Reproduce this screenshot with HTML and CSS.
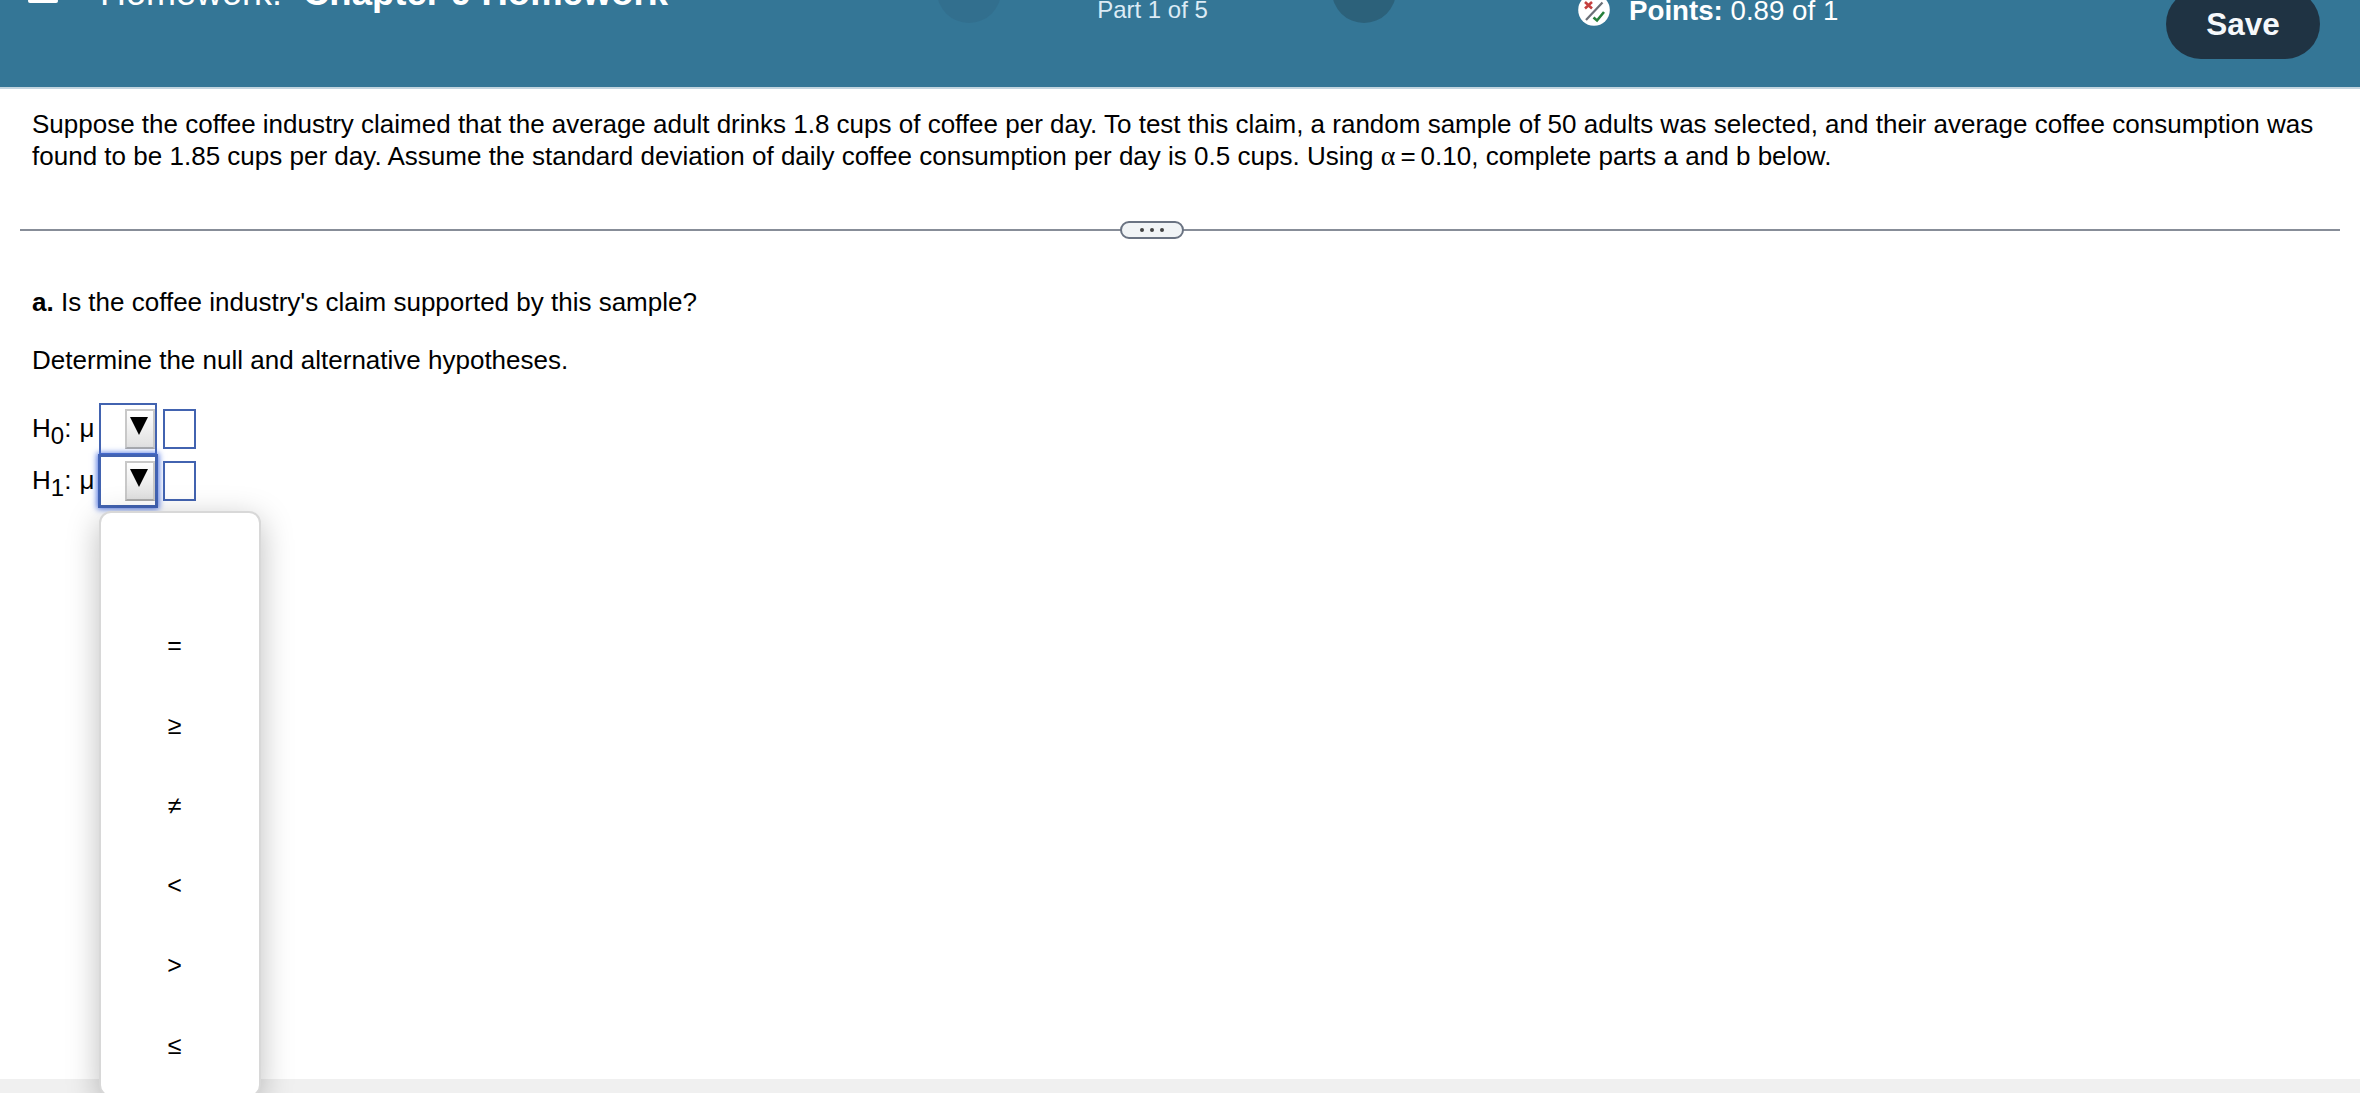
FILE: index.html
```html
<!DOCTYPE html>
<html lang="en">
<head>
    <meta charset="UTF-8">
    <meta name="viewport" content="width=device-width, initial-scale=1.0">
    <title>Homework: Chapter 9 Homework</title>
    <link rel="stylesheet" href="styles.css">
</head>
<body>
    <header class="top-bar">
        <div class="title-area">
            <span class="menu-icon"></span>
            <span class="title">Homework:</span>
            <span class="title-name">Chapter 9 Homework</span>
        </div>
        <div class="part-nav">
            <span class="nav-circle disabled"></span>
            <span class="part">Part 1 of 5</span>
            <span class="nav-circle"></span>
        </div>
        <div class="points">
            <svg class="points-icon" width="32" height="32" viewBox="0 0 32 32">
                <circle cx="16" cy="16" r="15.8" fill="#fff"/>
                <path d="M8 26 L24.500 8.500" stroke="#6b6f76" stroke-width="2.200"/>
                <path d="M7 8 L14 14.500 M14 8 L7 14.500" stroke="#c5403f" stroke-width="2.600"/>
                <path d="M15.500 23.500 L19 26.500 L26 18" fill="none" stroke="#26803a" stroke-width="2.600"/>
            </svg>
            <span class="points-text"><b>Points:</b> 0.89 of 1</span>
        </div>
        <button class="save-btn">Save</button>
    </header>

    <main class="content">
        <p class="question">Suppose the coffee industry claimed that the average adult drinks 1.8 cups of coffee per day. To test this claim, a random sample of 50 adults was selected, and their average coffee consumption was<br><span class="second-line">found to be 1.85 cups per day. Assume the standard deviation of daily coffee consumption per day is 0.5 cups. Using <span class="alpha">α</span><span class="eq">=</span>0.10, complete parts a and b below.</span></p>

        <div class="divider">
            <button class="divider-btn"><i></i><i></i><i></i></button>
        </div>

        <p class="part-a"><b>a.</b> Is the coffee industry's claim supported by this sample?</p>
        <p class="task">Determine the null and alternative hypotheses.</p>

        <div class="hypothesis">
            <span class="label">H<sub>0</sub>:<span class="mu">μ</span></span>
            <div class="select"><span class="arrow-btn"><span class="arrow"></span></span></div>
            <div class="answer"></div>
        </div>
        <div class="hypothesis">
            <span class="label">H<sub>1</sub>:<span class="mu">μ</span></span>
            <div class="select focused">
                <span class="arrow-btn"><span class="arrow"></span></span>
                <ul class="menu">
                    <li></li>
                    <li>=</li>
                    <li>≥</li>
                    <li>≠</li>
                    <li>&lt;</li>
                    <li>&gt;</li>
                    <li>≤</li>
                </ul>
            </div>
            <div class="answer"></div>
        </div>
    </main>
    <footer class="bottom-bar"></footer>
</body>
</html>
```
FILE: styles.css
```css
* {
    box-sizing: border-box;
}

body {
    margin: 0;
    height: 1093px;
    overflow: hidden;
    display: flex;
    flex-direction: column;
    font-family: "Liberation Sans", Arial, sans-serif;
    font-size: 26px;
    color: #000;
    background-color: #fff;
}

p {
    margin: 0;
}

/* header, scrolled partly out of the window */
.top-bar {
    height: 89px;
    flex-shrink: 0;
    display: grid;
    grid-template-columns: 937px 641px 588px 154px;
    align-items: start;
    background-color: #347696;
    border-bottom: 2px solid #c3d5df;
    color: #fff;
    white-space: nowrap;
}

.title-area {
    display: flex;
    align-items: flex-start;
    margin-top: -27px;
    padding-left: 28px;
    font-size: 36px;
    line-height: 40px;
}

.menu-icon {
    width: 30px;
    height: 4px;
    margin-top: 26px;
    margin-right: 42px;
    border-radius: 2px;
    background-color: #fff;
}

.title {
    width: 203px;
}

.title-name {
    font-weight: bold;
    font-size: 36.5px;
}

.part-nav {
    display: flex;
    align-items: flex-start;
    margin-top: -41px;
}

.nav-circle {
    width: 64px;
    height: 64px;
    border-radius: 50%;
    background-color: #2c617a;
}

.nav-circle.disabled {
    background-color: #326f8e;
}

.part {
    width: 331px;
    padding-right: 28px;
    margin-top: 36px;
    text-align: center;
    font-size: 24px;
    line-height: 30px;
    color: #dcebf5;
}

.points {
    display: flex;
    align-items: flex-start;
    margin-top: -5px;
    font-size: 27.7px;
    line-height: 32px;
}

.points-icon {
    margin-top: -1px;
    margin-right: 19px;
}

.save-btn {
    height: 70px;
    width: 154px;
    margin-top: -11px;
    padding: 0;
    border: none;
    border-radius: 35px;
    background-color: #1f3343;
    color: #f5f8fb;
    font-family: inherit;
    font-size: 31.5px;
    font-weight: bold;
}

.content {
    flex: 1;
    padding: 19px 20px 0;
    white-space: nowrap;
}

.question {
    padding-left: 12px;
    line-height: 32px;
}

.second-line {
    letter-spacing: 0.01px;
}

.alpha {
    font-family: "Liberation Serif", serif;
    font-size: 28px;
    line-height: 1;
}

.eq {
    margin: 0 5px;
}

.divider {
    height: 18px;
    margin-top: 49px;
    display: flex;
    align-items: center;
    justify-content: center;
    background: linear-gradient(#878d98, #878d98) center / 100% 2px no-repeat;
}

.divider-btn {
    display: flex;
    align-items: center;
    justify-content: center;
    gap: 6px;
    width: 64px;
    height: 18px;
    margin-right: 56px;
    padding: 0;
    border: 2px solid #6a7382;
    border-radius: 9px;
    background-color: #f1f4f6;
}

.divider-btn i {
    width: 4px;
    height: 4px;
    border-radius: 50%;
    background-color: #444;
}

.part-a,
.task {
    padding-left: 12px;
    line-height: 30px;
}

.part-a {
    margin-top: 48px;
}

.task {
    margin-top: 28px;
    margin-bottom: 28px;
}

.hypothesis {
    display: flex;
    align-items: center;
    height: 52px;
    padding-left: 12px;
}

.label {
    width: 67px;
    padding-bottom: 2px;
    line-height: 30px;
}

.label sub {
    line-height: 0;
    font-size: 24px;
    vertical-align: -7px;
}

.mu {
    margin-left: 8px;
}

.select {
    position: relative;
    display: flex;
    align-items: center;
    justify-content: flex-end;
    width: 58px;
    height: 52px;
    border: 2px solid #4263b0;
}

.select.focused {
    box-shadow: 0 0 0 1px #4263b8, 0 0 6px 2px #4a70e0;
}

.arrow-btn {
    width: 30px;
    height: 40px;
    padding: 6px 0 0 3px;
    border: 2px solid #c8c8c8;
    border-bottom-color: #aaa;
    background: linear-gradient(#fff, #e0e0e0);
}

.arrow {
    display: block;
    width: 18px;
    height: 18px;
    background-color: #000;
    clip-path: polygon(0 0, 100% 0, 50% 100%);
}

.answer {
    width: 33px;
    height: 40px;
    margin-left: 6px;
    border: 2px solid #4263b0;
}

.menu {
    position: absolute;
    top: 54px;
    left: -2px;
    width: 162px;
    height: 586px;
    margin: 0;
    padding: 12px 0 0;
    list-style: none;
    border: 2px solid #d8d8d8;
    border-radius: 12px;
    background-color: #fff;
    box-shadow: 0 8px 32px rgba(0, 0, 0, 0.26);
}

.menu li {
    height: 80px;
    padding-right: 11px;
    line-height: 80px;
    text-align: center;
    font-size: 25px;
}

.bottom-bar {
    height: 14px;
    background-color: #f0f0f0;
}
```
